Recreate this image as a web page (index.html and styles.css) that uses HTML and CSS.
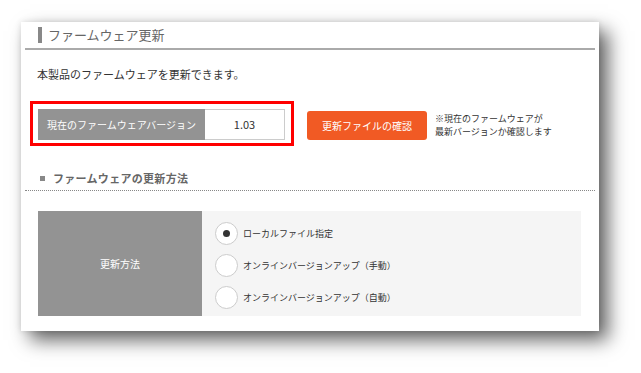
FILE: index.html
```html
<!DOCTYPE html>
<html lang="ja">
<head>
  <meta charset="UTF-8" />
  <meta name="viewport" content="width=device-width, initial-scale=1.0" />
  <title>ファームウェア更新</title>
  <link rel="stylesheet" href="styles.css">
</head>
<body>
  <div class="panel">
    <div class="panel-head">
      <span class="head-bar"></span>
      <h1>ファームウェア更新</h1>
    </div>

    <p class="intro">本製品のファームウェアを更新できます。</p>

    <div class="version-row">
      <div class="version-mark">
        <div class="version-label">現在のファームウェアバージョン</div>
        <div class="version-value">1.03</div>
      </div>
      <button class="check-btn" type="button">更新ファイルの確認</button>
      <p class="check-note">※現在のファームウェアが<br>最新バージョンか確認します</p>
    </div>

    <h2 class="sub-head"><span class="sq"></span>ファームウェアの更新方法</h2>

    <div class="method">
      <div class="method-label">更新方法</div>
      <div class="method-opts">
        <label class="opt"><span class="radio checked"></span>ローカルファイル指定</label>
        <label class="opt"><span class="radio"></span>オンラインバージョンアップ（手動）</label>
        <label class="opt"><span class="radio"></span>オンラインバージョンアップ（自動）</label>
      </div>
    </div>
  </div>
</body>
</html>
```

FILE: styles.css
```css
body {
  margin: 0;
  padding: 22px 0 42px 21px;
  background: #fff;
  font-family: "Noto Sans CJK JP", "Noto Sans", sans-serif;
  color: #333;
}
.panel {
  width: 570px;
  height: 296px;
  padding: 0 4px 13px;
  background: #fff;
  box-shadow: 9px 9px 18px rgba(0,0,0,0.62), 0 0 6px rgba(0,0,0,0.12);
}
.panel-head {
  display: flex;
  align-items: center;
  height: 26px;
  padding-left: 13px;
  border-bottom: 2px solid #aaa;
}
.head-bar {
  width: 4px;
  height: 16px;
  background: #888;
  margin-right: 6px;
}
.panel-head h1 {
  margin: 0;
  font-size: 13px;
  font-weight: normal;
  color: #666;
  line-height: 16px;
}
.intro {
  margin: 16px 0 0 12px;
  font-size: 11px;
  line-height: 16px;
}
.version-row {
  display: flex;
  align-items: flex-start;
  margin-top: 19px;
}
.version-mark {
  display: flex;
  margin-left: 5px;
  padding: 5px 6px 3px 5px;
  border: 3px solid #f00;
}
.version-label {
  width: 167px;
  height: 31px;
  line-height: 31px;
  background: #939393;
  color: #fff;
  font-size: 10px;
  text-align: center;
}
.version-value {
  width: 79px;
  height: 29px;
  line-height: 29px;
  border: 1px solid #ccc;
  border-left: none;
  background: #fff;
  font-size: 11px;
  text-align: center;
}
.check-btn {
  margin: 10px 0 0 13px;
  width: 120px;
  height: 29px;
  padding: 0;
  border: none;
  border-radius: 3px;
  background: #f15a24;
  color: #fff;
  font-family: inherit;
  font-size: 10px;
  cursor: pointer;
}
.check-note {
  margin: 11px 0 0 8px;
  font-size: 9px;
  line-height: 13px;
}
.sub-head {
  display: flex;
  align-items: center;
  box-sizing: border-box;
  height: 21px;
  margin: 24px 0 0;
  padding: 0 0 4px 15px;
  border-bottom: 1px dotted #888;
  font-size: 11px;
  letter-spacing: 0.3px;
  color: #666;
  line-height: 16px;
}
.sq {
  width: 5px;
  height: 5px;
  background: #888;
  margin-right: 8px;
}
.method {
  display: flex;
  margin: 20px 14px 0 13px;
  height: 105px;
}
.method-label {
  width: 164px;
  display: flex;
  align-items: center;
  justify-content: center;
  background: #939393;
  color: #fff;
  font-size: 10px;
}
.method-opts {
  flex: 1;
  background: #f5f5f5;
  display: flex;
  flex-direction: column;
  justify-content: center;
  gap: 9px;
  padding: 4px 0 0 13px;
}
.opt {
  display: flex;
  align-items: center;
  font-size: 9px;
}
.radio {
  width: 21px;
  height: 21px;
  border: 1px solid #ccc;
  border-radius: 50%;
  background: #fff;
  margin-right: 5px;
  display: flex;
  align-items: center;
  justify-content: center;
}
.radio.checked::after {
  content: "";
  width: 7px;
  height: 7px;
  border-radius: 50%;
  background: #333;
}
```
